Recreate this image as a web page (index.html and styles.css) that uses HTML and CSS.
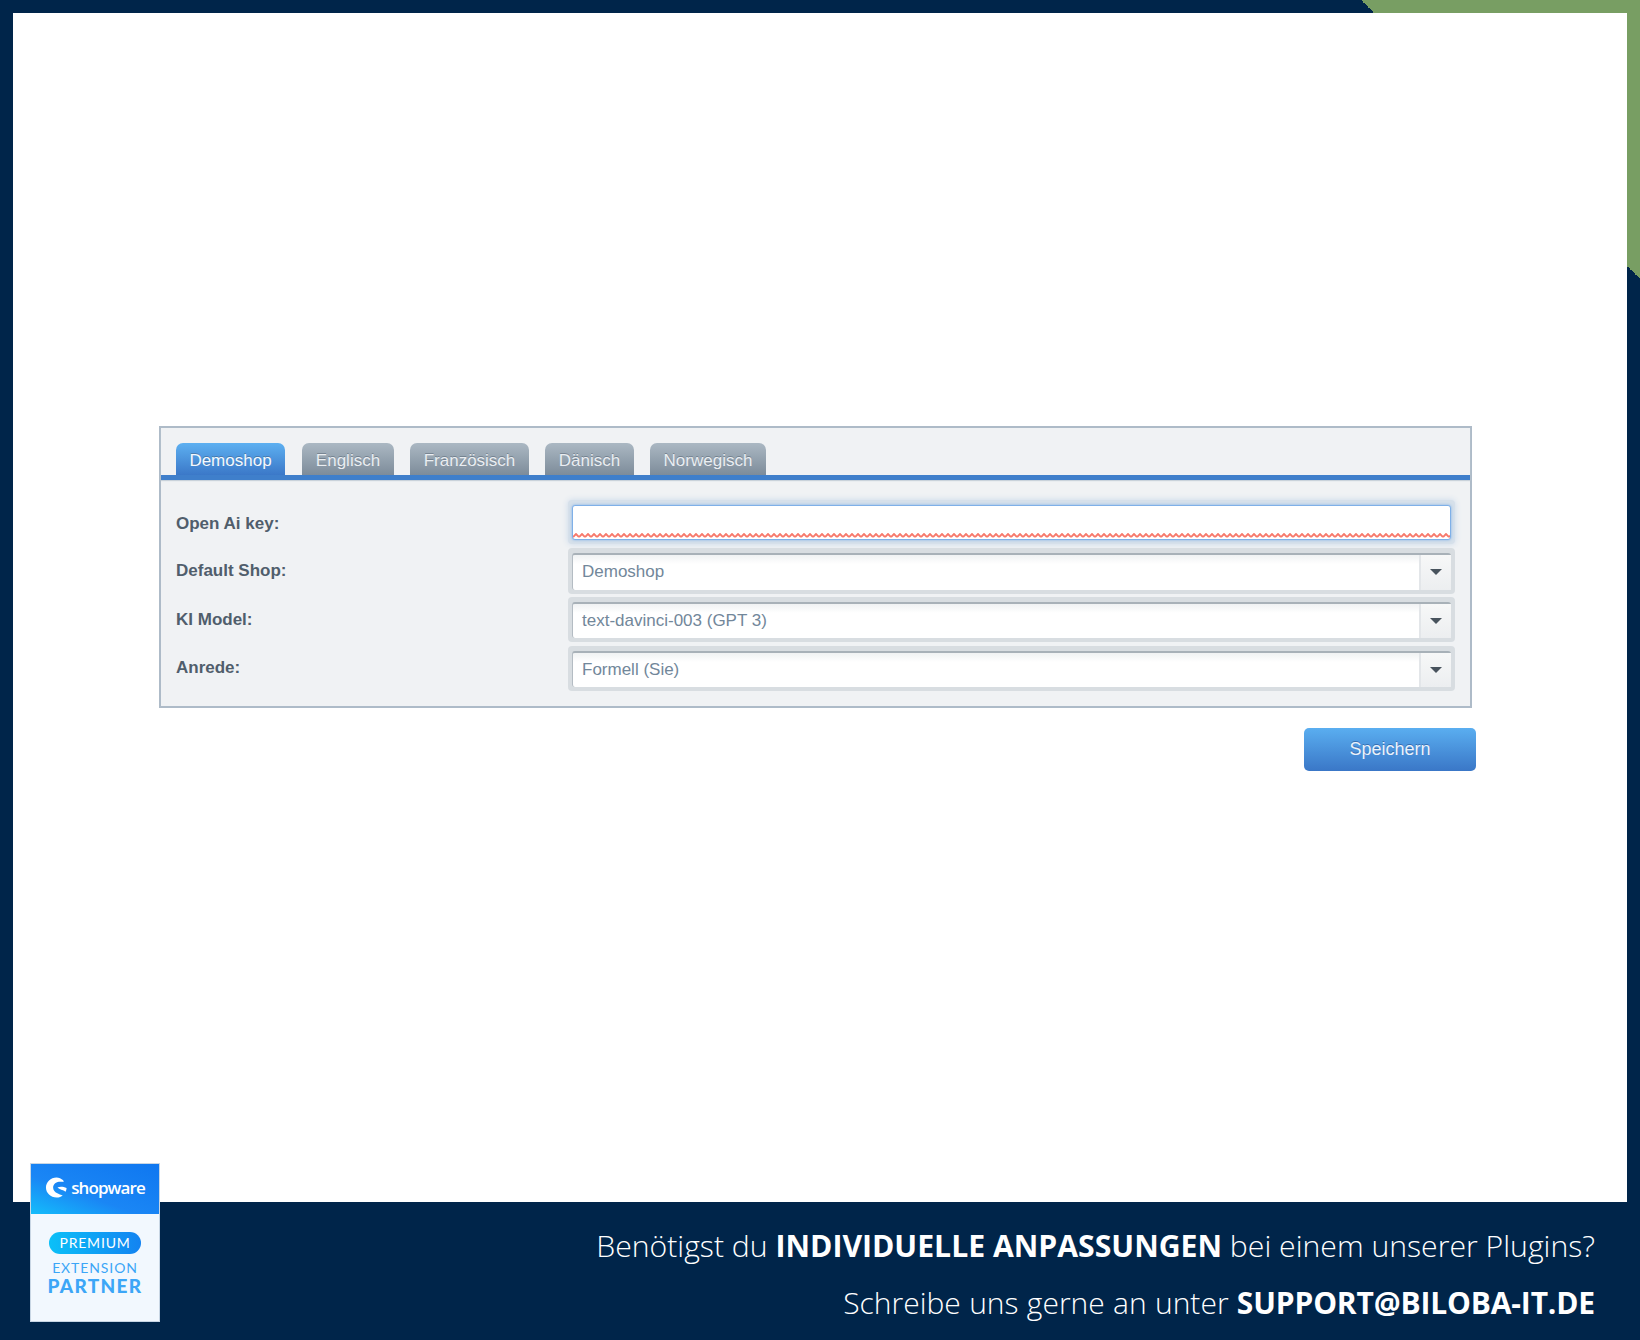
FILE: index.html
```html
<html>
<head>
    <title>Einstellungen</title>
    <link rel="stylesheet" href="styles.css">
</head>
<body>
    <div class="frame">
        <div class="canvas">
            <div class="settings">
                <div class="panel">
                    <div class="tab-bar">
                        <div class="tab active">Demoshop</div>
                        <div class="tab tab-englisch">Englisch</div>
                        <div class="tab tab-franz">Französisch</div>
                        <div class="tab tab-daenisch">Dänisch</div>
                        <div class="tab tab-norweg">Norwegisch</div>
                    </div>
                    <div class="form-grid">
                        <label class="field-label first">Open Ai key:</label>
                        <div class="field-wrap focused">
                            <div class="text-input">
                                <svg class="zigzag" width="100%" height="5">
                                    <defs>
                                        <pattern id="zig" width="6" height="5" patternUnits="userSpaceOnUse">
                                            <path d="M0 4 L3 1 L6 4" fill="none" stroke="#f7796b" stroke-width="1.9"/>
                                        </pattern>
                                    </defs>
                                    <rect width="100%" height="5" fill="url(#zig)"/>
                                </svg>
                            </div>
                        </div>

                        <label class="field-label">Default Shop:</label>
                        <div class="field-wrap">
                            <div class="combo">
                                <span class="combo-value">Demoshop</span>
                                <span class="combo-trigger"><i class="arrow"></i></span>
                            </div>
                        </div>

                        <label class="field-label">KI Model:</label>
                        <div class="field-wrap">
                            <div class="combo">
                                <span class="combo-value">text-davinci-003 (GPT 3)</span>
                                <span class="combo-trigger"><i class="arrow"></i></span>
                            </div>
                        </div>

                        <label class="field-label">Anrede:</label>
                        <div class="field-wrap">
                            <div class="combo">
                                <span class="combo-value">Formell (Sie)</span>
                                <span class="combo-trigger"><i class="arrow"></i></span>
                            </div>
                        </div>
                    </div>
                </div>
                <div class="actions">
                    <button class="save-button">Speichern</button>
                </div>
            </div>
        </div>

        <div class="footer">
            <p class="footer-line">Benötigst du <strong>INDIVIDUELLE ANPASSUNGEN</strong> bei einem unserer Plugins?</p>
            <p class="footer-line second">Schreibe uns gerne an unter <strong>SUPPORT@BILOBA-IT.DE</strong></p>
        </div>

        <div class="badge">
            <div class="badge-head">
                <svg class="badge-logo" width="23" height="23" viewBox="0 0 24 24">
                    <path fill="#fff" d="M19 4.500C17 2.600 14.500 1.500 12 1.500C6 1.500 1 6.300 1 12C1 17.800 6 22.500 12 22.500C14.800 22.500 17 21.500 18.500 20.300C15 19 9 17.500 8.500 12.500C8.200 9 11 6.500 14.500 6C16.500 5.800 18.500 6 19.500 6.300Z"/>
                    <path fill="#fff" d="M13 12C15 10.800 19 10.800 22.500 12.500C22.500 14 22 15.500 21.500 16.500C19 14.500 15 14 13 12Z"/>
                </svg>
                <span class="badge-brand">shopware</span>
            </div>
            <div class="badge-body">
                <div class="badge-pill">PREMIUM</div>
                <div class="badge-ext">EXTENSION</div>
                <div class="badge-partner">PARTNER</div>
            </div>
        </div>
    </div>
</body>
</html>
```

FILE: styles.css
```css
body {
    margin: 0;
    padding: 0;
    background-color: #00254a;
    font-family: "Liberation Sans", Arial, sans-serif;
}

.frame {
    position: relative;
    width: 1640px;
    height: 1340px;
    padding: 13px 13px 0;
    box-sizing: border-box;
    overflow: hidden;
    /* green corner behind the white area */
    background: linear-gradient(45deg, transparent 50%, #789e63 50%) top right / 279px 279px no-repeat;
}

.canvas {
    height: 1189px;
    padding-top: 413px;
    box-sizing: border-box;
    background-color: #fff;
}

.settings {
    width: 1317px;
    margin-left: 146px;
}

.panel {
    width: 1313px;
    height: 282px;
    box-sizing: border-box;
    background-color: #f0f2f4;
    border: 2px solid #aebbc8;
}

.tab-bar {
    display: flex;
    height: 52px;
    padding: 15px 0 0 15px;
    box-sizing: border-box;
    align-items: stretch;
    border-bottom: 5px solid #3f7fcb;
    box-shadow: 0 1px 1px #c9d2da;
}

.tab {
    width: 75px;
    margin-right: 16px;
    text-align: center;
    line-height: 35px;
    font-size: 17px;
    color: #eaeef2;
    border-radius: 7px 7px 0 0;
    background: linear-gradient(#abb8c3, #7d8c9a);
    text-shadow: 0 -1px 0 rgba(60, 75, 90, 0.4);
}

.tab.active {
    width: 109px;
    margin-right: 17px;
    color: #f4f9fe;
    background: linear-gradient(#5db0f1, #3b78c8);
}

.tab-englisch {
    width: 92px;
}

.tab-franz {
    width: 119px;
}

.tab-daenisch {
    width: 89px;
    margin-right: 16px;
}

.tab-norweg {
    width: 116px;
}

.form-grid {
    display: grid;
    grid-template-columns: 392px 887px;
    grid-template-rows: 44px 46px 45px 45px;
    row-gap: 3.5px;
    padding: 20px 0 0 15px;
}

.field-label {
    align-self: center;
    font-size: 17px;
    font-weight: bold;
    color: #505e6c;
}

.field-label.first {
    padding-top: 3px;
}

.field-wrap {
    padding: 5px 4px 4px;
    box-sizing: border-box;
    background-color: #d8dde1;
    border-radius: 4px;
}

.field-wrap.focused {
    background-color: #d6e0ea;
    box-shadow: 0 0 6px #c9d9ea;
}

.text-input {
    display: flex;
    flex-direction: column;
    justify-content: flex-end;
    height: 100%;
    box-sizing: border-box;
    background-color: #fff;
    border: 1px solid #7fb0e8;
    border-radius: 3px;
    box-shadow: 0 0 3px #7fb0e8;
}

.zigzag {
    display: block;
    margin-bottom: 1px;
}

.combo {
    display: flex;
    height: 100%;
    box-sizing: border-box;
    background: linear-gradient(#f0f2f3, #fff 9px);
    border-top: 2px solid #a8b1b8;
    border-left: 1px solid #b4bcc3;
    border-radius: 3px;
}

.combo-value {
    flex: 1;
    padding-left: 9px;
    font-size: 17px;
    line-height: 34px;
    color: #72879a;
}

.combo-trigger {
    display: flex;
    width: 30px;
    align-items: center;
    justify-content: center;
    border-left: 2px solid #e3e6e9;
    background: linear-gradient(#f7f8f8, #eceef0);
}

.arrow {
    width: 0;
    height: 0;
    border-left: 6px solid transparent;
    border-right: 6px solid transparent;
    border-top: 6px solid #48535d;
}

.actions {
    display: flex;
    justify-content: flex-end;
    margin-top: 20px;
}

.save-button {
    width: 172px;
    height: 43px;
    padding: 0;
    border: none;
    border-radius: 5px;
    font-family: inherit;
    font-size: 18px;
    color: #eaf2fb;
    background: linear-gradient(#5aaef0, #3a77c7);
    text-shadow: 0 -1px 0 rgba(30, 70, 130, 0.5);
}

.footer {
    height: 138px;
    padding: 19px 32px 0 0;
    box-sizing: border-box;
    text-align: right;
    font-family: "Open Sans", sans-serif;
    font-weight: 300;
    font-size: 30.2px;
    color: #fff;
}

.footer-line {
    margin: 0;
    height: 57px;
    line-height: 49px;
}

.footer-line strong {
    font-weight: 700;
}

.footer-line.second {
    font-size: 30px;
    word-spacing: 0.5px;
}

.footer-line.second strong {
    letter-spacing: -0.15px;
}

.badge {
    position: absolute;
    left: 30px;
    top: 1163px;
    display: flex;
    flex-direction: column;
    width: 130px;
    height: 159px;
    box-sizing: border-box;
    border: 1px solid #c8d6e4;
    background-color: #f2f8fe;
    font-family: "Lato", sans-serif;
}

.badge-head {
    display: flex;
    height: 50px;
    padding-bottom: 3px;
    box-sizing: border-box;
    align-items: center;
    justify-content: center;
    gap: 3px;
    background: linear-gradient(20deg, #14bdfb 0%, #1a86f5 40%, #0f77f0 100%);
}

.badge-brand {
    font-family: "Open Sans", sans-serif;
    font-size: 17px;
    font-weight: 600;
    letter-spacing: -0.9px;
    color: #fff;
}

.badge-body {
    display: flex;
    flex-direction: column;
    align-items: center;
    padding-top: 18px;
}

.badge-pill {
    width: 92px;
    height: 22px;
    border-radius: 11px;
    text-align: center;
    line-height: 22px;
    font-size: 14px;
    letter-spacing: 0.8px;
    color: #fff;
    background: linear-gradient(90deg, #0bc0f8, #1383f1);
}

.badge-ext {
    margin-top: 5px;
    font-size: 14px;
    line-height: 17px;
    letter-spacing: 0.9px;
    color: #3ca6f7;
}

.badge-partner {
    margin-top: -1px;
    font-size: 19px;
    font-weight: 900;
    line-height: 22px;
    letter-spacing: 1.3px;
    color: #3ca6f7;
}
```
